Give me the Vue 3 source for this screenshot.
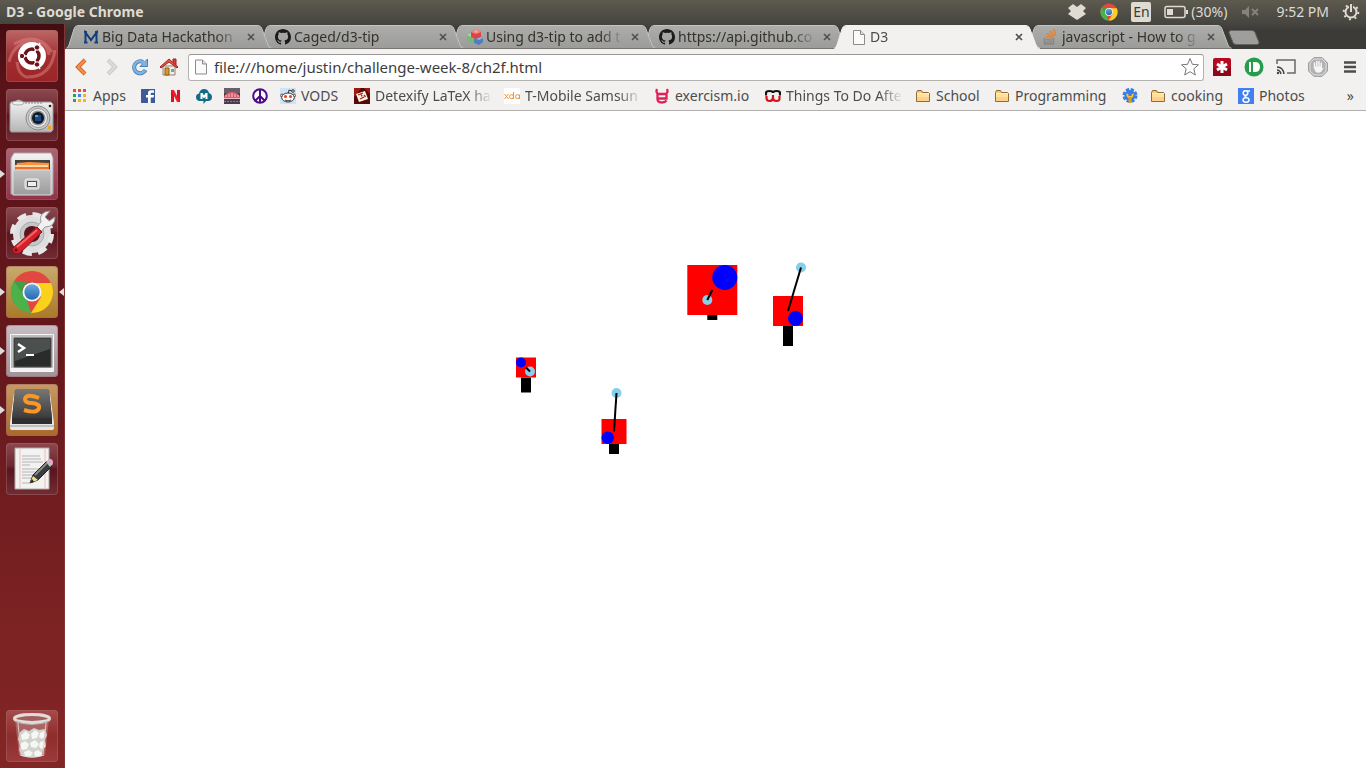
<script setup>
import { ref } from 'vue'

const address = ref('file:///home/justin/challenge-week-8/ch2f.html')

const icons = {
  doc: '<path d="M2.5 1.5h7l4 4v10h-11z" fill="#fafafa" stroke="#8b8b8b"/><path d="M9.5 1.5v4h4" fill="#ddd" stroke="#8b8b8b"/>',
  folder: '<path d="M1.5 13.5v-9l1-2h4l1 2h6l1 1v8z" fill="#f8c66d" stroke="#8f6a3a"/><path d="M2 6h12v3H2z" fill="#ffe2a2"/><path d="M2 9h12v4H2z" fill="#fdd286"/><path d="M2 5.500h12" stroke="#fff0c4"/>',
  github: '<path fill="#1b1b1b" d="M8 0C3.580 0 0 3.580 0 8c0 3.540 2.290 6.530 5.470 7.590.4.070.55-.17.55-.38v-1.490c-2.230.48-2.700-1.070-2.700-1.070-.36-.93-.89-1.180-.89-1.180-.73-.5.050-.49.050-.49.8.060 1.230.83 1.230.83.72 1.230 1.880.87 2.340.66.070-.52.28-.87.51-1.070-1.780-.2-3.640-.89-3.640-3.950 0-.87.31-1.590.82-2.150-.08-.2-.36-1.020.080-2.120 0 0 .67-.21 2.200.82a7.600 7.600 0 0 1 4 0c1.530-1.040 2.200-.82 2.200-.82.44 1.100.16 1.920.080 2.120.51.56.82 1.270.82 2.150 0 3.070-1.870 3.750-3.650 3.950.29.25.54.73.54 1.480v2.200c0 .21.15.46.55.38A8 8 0 0 0 16 8c0-4.420-3.580-8-8-8z"/>',
  mmark: '<path d="M2.500 14V3.500L8 11l5.500-7.500V14M1 3h3M12 3h3M1 13.500h3.500M11.500 13.500H15" fill="none" stroke="#123f7c" stroke-width="2"/>',
  cubes: '<path d="M0 6l4-2 4 2v6l-4 2-4-3z" fill="#79b777"/><path d="M0 6l4-2 4 2-4 2z" fill="#a9d6a3"/><path d="M7 9l4-2 5 2v4l-4 3-5-2z" fill="#4e7fc0"/><path d="M7 9l4-2 5 2-4 2z" fill="#8db6e6"/><path d="M4 3l5-3 5 3v5l-5 2-5-2z" fill="#d84747"/><path d="M4 3l5-3 5 3-5 2z" fill="#f58580"/><circle cx="9" cy="2" r="1.500" fill="#f9a39b"/>',
  stack: '<path d="M1.500 9v6h9V9" fill="none" stroke="#858585" stroke-width="1.500"/><path d="M3 13h6M3 10.500l6 .5" stroke="#8f8b82" stroke-width="1.500"/><path d="M3 7.500l6 1.500M4 4.500l6 3.500M7 2l4.500 5M11 0l1.500 6" stroke="#e38431" stroke-width="1.500"/>',
  apps: '<path d="M1 1h3v3H1zM6 1h3v3H6zM11 1h3v3h-3z" fill="#e94b3c"/><path d="M1 6h3v3H1z" fill="#29a55a"/><path d="M6 6h3v3H6z" fill="#3d85ee"/><path d="M11 6h3v3h-3z" fill="#f4b321"/><path d="M1 11h3v3H1z" fill="#29a55a"/><path d="M6 11h3v3H6zM11 11h3v3h-3z" fill="#f4b321"/>',
  facebook: '<path d="M1 1h14v14H1z" fill="#3f5c9a"/><path d="M8 15V9.500H6V7h2V5q0-2.700 3-2.700h3v2.400h-2q-1.300 0-1.300 1V7H14l-.4 2.500h-2.900V15z" fill="#fff"/>',
  netflix: '<path d="M3 2h3v12H3zM9 2h3v12H9z" fill="#d01525"/><path d="M3 2h3l6 12H9z" fill="#f31b2d"/>',
  cloud: '<path d="M4 13q-4 0-4-4 0-3 3-3.500Q4 1 8 1q4 0 5 4 3 1 3 4 0 4-4 4h-2l-2.500 3V13z" fill="#146b87"/><path d="M4.500 11V5h2L8 7.500 9.500 5h2v6h-2V8.500L8 10.500 6.500 8.500V11z" fill="#fff"/>',
  photo: '<path d="M0 0h16v16H0z" fill="#4a3b50"/><path d="M0 0h16v5H0z" fill="#695f68"/><path d="M0 9q2-5 8-5t8 5v2H0z" fill="#d75e6d"/><path d="M2 9V7M5 9V6M8 9V5M11 9V6M14 9V7" stroke="#ffc3c6"/><path d="M0 10.500h16" stroke="#eeb6bd"/><path d="M0 13.500h16" stroke="#a36c7c" stroke-dasharray="2 1"/>',
  peace: '<circle cx="8" cy="8" r="6.800" fill="#fff" stroke="#4d0a86" stroke-width="2"/><path d="M8 1v14M8 8l-5 5M8 8l5 5" stroke="#4d0a86" stroke-width="2"/>',
  reddit: '<path d="M0 0h16v16H0z" fill="#cfe3f5"/><path d="M8 6l1-4 3 1" fill="none" stroke="#333"/><circle cx="13" cy="3" r="1.300" fill="#fff" stroke="#333"/><circle cx="2" cy="7.500" r="1.500" fill="#fff" stroke="#555"/><circle cx="14" cy="7.500" r="1.500" fill="#fff" stroke="#555"/><ellipse cx="8" cy="9.500" rx="6.300" ry="4.500" fill="#fff" stroke="#333"/><circle cx="5.500" cy="8.500" r="1.500" fill="#f13b1c"/><circle cx="10.500" cy="8.500" r="1.500" fill="#f13b1c"/><path d="M5 12q3 2 6 0" fill="none" stroke="#333"/>',
  detexify: '<path d="M0 0h16v16H0z" fill="#550808"/><path d="M0 0h7L3 6 0 9zM10 0h6v6z" fill="#9c1d0e"/><path d="M2 6l9-3 3 8-9 3z" fill="#fff5e4"/><path d="M4 7l5-2M7 5.500l1 3M6 11l4-2M10 7l1.500 2" stroke="#b32117" stroke-width="1.300"/>',
  xda: '<path d="M0 0h16v16H0z" fill="#fff"/><path d="M.5 6l4 5M4.500 6l-4 5M9.500 4v7M15.500 6.500V11" fill="none" stroke="#f0953d"/><circle cx="7.500" cy="8.700" r="2" fill="none" stroke="#f0953d"/><circle cx="13.500" cy="8.700" r="2" fill="none" stroke="#f0953d"/>',
  exercism: '<path d="M3 1q-1.500 4 1.500 5h7q3-1 1.500-5M3.500 6v5q0 3.500 4.500 3.500 3 0 4.500-2M4 10.500h8.500V6" fill="none" stroke="#df2159" stroke-width="2.300"/>',
  things: '<path d="M1 7.500V5q0-2 3.500-2T8 5q0-2 3.500-2T15 5v2.500" fill="none" stroke="#111" stroke-width="2.200"/><path d="M1.500 8v2q0 3 3 3T8 10V7M8 8v2q0 3 3.500 3t3-3V8" fill="none" stroke="#d5131c" stroke-width="2.200"/>',
  gear: '<circle cx="8" cy="7.500" r="5.500" fill="#3b7de8"/><circle cx="8" cy="7.500" r="6" fill="none" stroke="#3b7de8" stroke-width="3" stroke-dasharray="3.200 1.500"/><path d="M4.500 5v3l2 2.500h3l2-2.500V5L9.500 6.500V8h-3V6.500z" fill="#fbc42f"/><path d="M6.500 9h3v6h-3z" fill="#d99d1a"/>',
  google: '<path d="M0 0h16v16H0z" fill="#437ff1"/><circle cx="7.500" cy="5" r="2.300" fill="none" stroke="#fff" stroke-width="1.500"/><path d="M9 3h3M9 7.500q-3 1-1.500 2" fill="none" stroke="#fff" stroke-width="1.300"/><ellipse cx="8" cy="12" rx="3" ry="2.200" fill="none" stroke="#fff" stroke-width="1.500"/>'
}

const tabs = [
  { title: 'Big Data Hackathon', icon: 'mmark' },
  { title: 'Caged/d3-tip', icon: 'github' },
  { title: 'Using d3-tip to add t', icon: 'cubes' },
  { title: 'https://api.github.co', icon: 'github' },
  { title: 'D3', icon: 'doc', active: true },
  { title: 'javascript - How to g', icon: 'stack' }
]

const bookmarks = [
  { icon: 'apps', text: 'Apps', width: 35 },
  { icon: 'facebook', name: 'Facebook' },
  { icon: 'netflix', name: 'Netflix' },
  { icon: 'cloud', name: 'M' },
  { icon: 'photo', name: 'Photo page' },
  { icon: 'peace', name: 'Peace' },
  { icon: 'reddit', text: 'VODS', width: 41 },
  { icon: 'detexify', text: 'Detexify LaTeX ha', width: 117, cut: true },
  { icon: 'xda', text: 'T-Mobile Samsun', width: 117, cut: true },
  { icon: 'exercism', text: 'exercism.io', width: 78 },
  { icon: 'things', text: 'Things To Do Afte', width: 117, cut: true },
  { icon: 'folder', text: 'School', width: 46 },
  { icon: 'folder', text: 'Programming', width: 95 },
  { icon: 'gear', name: 'Tools' },
  { icon: 'folder', text: 'cooking', width: 55 },
  { icon: 'google', text: 'Photos', width: 50 }
]

const tiles = {
  ubuntu: '<path d="M3 32q5-22 29-21 10 4 11 14M49 20Q45 48 20 47q-8-3-9-15M8 14q24-13 38 8" fill="none" stroke="#e58d8d" stroke-width="3" opacity=".45"/><circle cx="26" cy="26" r="14" fill="#fff"/><circle cx="26" cy="26" r="7" fill="none" stroke="#6f1219" stroke-width="3.500"/><path d="M26 26L12 26M26 26l8-13M26 26l8 13" stroke="#fff" stroke-width="1.500"/><circle cx="26" cy="26" r="5" fill="#fff"/><g fill="#6f1219" stroke="#fff" stroke-width="1"><circle cx="16" cy="26" r="2.700"/><circle cx="31" cy="17.500" r="2.700"/><circle cx="31" cy="34.500" r="2.700"/></g>',
  camera: '<path d="M5 13h4q3-4 8 0h28l2 2v26l-2 2H5l-1-2V15z" fill="url(#silver)" stroke="#999"/><ellipse cx="12" cy="14" rx="6" ry="2" fill="#eee" stroke="#aaa"/><path d="M19 14h18" stroke="#888" stroke-dasharray="2 1"/><circle cx="32" cy="29" r="12" fill="#c9c9c9" stroke="#8a8a8a"/><circle cx="32" cy="29" r="9.500" fill="#ececec" stroke="#999"/><circle cx="32" cy="29" r="7.500" fill="#8e9297"/><circle cx="32" cy="29" r="6" fill="#14181f"/><path d="M29 26h6v6h-6z" fill="#174a8c"/><path d="M29 26h3v2h-3z" fill="#58a4de"/><path d="M42 37h3v3h-3z" fill="#f6a020"/><circle cx="44" cy="17" r="1.300" fill="#222"/>',
  files: '<path d="M8 5h37l2 5v36H5V10z" fill="url(#silver)" stroke="#aaa"/><path d="M9 12h35v12H9z" fill="#44403c"/><path d="M11 15l12-1 20 1v8H9z" fill="#fb923e"/><path d="M9 18h33" stroke="#fff0cf" stroke-width="1.500"/><path d="M9 20h34" stroke="#ed7128" stroke-width="2"/><path d="M7 22h38v25H7z" fill="url(#drawer)" stroke="#ddd"/><rect x="19" y="31" width="14" height="10" rx="2" fill="#ccc" stroke="#efefef"/><rect x="21.500" y="33.500" width="9" height="5" fill="#eee" stroke="#555"/>',
  settings: '<circle cx="26" cy="27" r="15" fill="none" stroke="#dedede" stroke-width="8"/><circle cx="26" cy="27" r="19.500" fill="none" stroke="#e6e6e6" stroke-width="5" stroke-dasharray="9 6.300"/><circle cx="26" cy="27" r="12" fill="#c6c6c6" stroke="#aaa"/><circle cx="26" cy="27" r="8" fill="#59151d"/><path d="M29 22l6-7q-2-7 4-10l5-1-5 6 4 4 6-4q0 10-10 10l-6 7z" fill="#f1f1f1" stroke="#999"/><path d="M31 20l5 5-22 21q-5 2-7-1-2-3 1-5z" fill="#d71f29" stroke="#7d171d"/><path d="M11 40l20-17" stroke="#f26569" stroke-width="2"/><circle cx="10" cy="43" r="1.500" fill="#5e1117"/>',
  chrome: '<circle cx="26" cy="26" r="21" fill="#e14940"/><path d="M8 15L20 31 25 47A21 21 0 0 1 8 15" fill="#4bb24b"/><path d="M26 17h19A21 21 0 0 1 25 47l10-16z" fill="#fbd21b"/><path d="M8 15l11 16 1-10L26 17" fill="#3fa045"/><path d="M17 24q2-7 9-7" stroke="#cc3935" stroke-width="2" fill="none"/><circle cx="26" cy="26" r="9.500" fill="#f5f5f5"/><circle cx="26" cy="26" r="7.700" fill="url(#blueball)"/>',
  terminal: '<path d="M4.500 9.500h43v37h-43z" fill="#bdbdbd" stroke="#f5f5f5"/><path d="M4 43h44v3H4z" fill="#f2f2f2"/><path d="M8 13h37v29H8z" fill="#292c2b" stroke="#555"/><path d="M9 14h35v10L9 36z" fill="#4b504e"/><path d="M12 19l6 4-6 4" fill="none" stroke="#fff" stroke-width="2.500"/><path d="M20 30h8" stroke="#fff" stroke-width="2"/>',
  sublime: '<path d="M4 39L8 9h36l4 30v5q0 2-2 2H6q-2 0-2-2z" fill="#e6e6e6"/><path d="M4 42h44" stroke="#999"/><path d="M9 6h34l3 29v5H6v-5z" fill="#2f2f2f"/><path d="M11 5h30q2 0 2 2l3 27H6L9 7q0-2 2-2z" fill="url(#dark)"/><path d="M33 14q-13-5-14 1 0 4 7 4 8 1 7 5-2 6-15 2" fill="none" stroke="#f99725" stroke-width="4"/>',
  editor: '<path d="M9 5h34v41H9z" fill="#f2f2f0" stroke="#aaa"/><path d="M14 6v40M39 6v40" stroke="#f0bcbc"/><path d="M16 13h18M16 16h19M16 19h21M16 22h8M16 26h21M16 29h17M16 32h12M16 35h10M16 40h8" stroke="#b4b4b8"/><path d="M24 40l3-8 14-14 5 5-14 14z" fill="#383c3d" stroke="#222"/><path d="M29 32l12-12" stroke="#888" stroke-width="2"/><path d="M40 19l3-3 4 5-3 3z" fill="#bfc0c0"/><path d="M43 16q2-1 4 2v3l-2-1-3-3z" fill="#f09dcc"/><path d="M24 40l3-7 5 4z" fill="#f3db91"/><path d="M24 40l2-4 2 3z" fill="#222"/>',
  trash: '<path d="M9 9l4 36q13 5 26 0l4-36z" fill="#e3caca" opacity=".3"/><path d="M14 22l4-3 5 2 5-3 5 2 6-1 2 6-2 5 1 6-3 4-1 6q-10 3-20 0l-3-6 1-5-2-6z" fill="#d2d2cd"/><path d="M15 25l5-4 4 4-2 4-6 1zM25 24l4-4 4 3-2 5-5 1zM34 23l4-2 1 5-3 3-3-2zM14 34l5-3 4 3-2 5-5 1zM24 33l5-3 4 4-3 4-5-1zM34 32l4-1 1 6-4 2-2-3zM18 42l5-2 4 3-3 4-5-1zM28 42l4-2 4 3-1 3-6 1z" fill="#f6f6f2"/><path d="M12 13l3 31M40 13l-3 31" stroke="#e0c7c7"/><path d="M14 45q12 4 24 0" fill="none" stroke="#ddd"/><ellipse cx="26" cy="8.500" rx="17.500" ry="4" fill="#a45e5e" stroke="#deddd9" stroke-width="3"/><path d="M9 11q17 7 34 0" fill="none" stroke="#b5b3b0"/>'
}

const launchers = [
  { id: 'ubuntu', name: 'Dash home' },
  { id: 'camera', name: 'Camera' },
  { id: 'files', name: 'Files', running: true },
  { id: 'settings', name: 'System settings' },
  { id: 'chrome', name: 'Google Chrome', running: true, focused: true },
  { id: 'terminal', name: 'Terminal', running: true },
  { id: 'sublime', name: 'Sublime Text', running: true },
  { id: 'editor', name: 'Text editor' },
  { id: 'trash', name: 'Trash' }
]

/* cx, cy: middle of the body; dot: its blue circle; tip: end of the antenna */
const robots = [
  { cx: 461, cy: 256.5, side: 20, leg: 15, dot: [-1, -1], tip: [465, 260.5] },
  { cx: 549, cy: 320.5, side: 25, leg: 10, dot: [-1, 1], tip: [551.5, 282] },
  { cx: 647.3, cy: 179, side: 50, leg: 5, dot: [1, -1], tip: [642.3, 189] },
  { cx: 723, cy: 200, side: 30, leg: 20, dot: [1, 1], tip: [736, 156.5] }
]
</script>

<template>
  <div class="desktop">
    <svg class="defs" aria-hidden="true">
      <defs>
        <linearGradient id="silver" x1="0" y1="0" x2="0" y2="1"><stop offset="0" stop-color="#f4f4f4" /><stop offset="1" stop-color="#b5b5b5" /></linearGradient>
        <linearGradient id="drawer" x1="0" y1="0" x2="0" y2="1"><stop offset="0" stop-color="#c2c2c2" /><stop offset="1" stop-color="#9c9c9c" /></linearGradient>
        <linearGradient id="dark" x1="0" y1="0" x2="0" y2="1"><stop offset="0" stop-color="#777" /><stop offset="1" stop-color="#3b3b3b" /></linearGradient>
        <linearGradient id="blueball" x1="0" y1="0" x2="0" y2="1"><stop offset="0" stop-color="#6aa8dc" /><stop offset="1" stop-color="#2468b0" /></linearGradient>
        <linearGradient id="tabfill" x1="0" y1="0" x2="0" y2="1"><stop offset="0" stop-color="#acacaa" /><stop offset="1" stop-color="#9b9b99" /></linearGradient>
      </defs>
    </svg>

    <header class="panel">
      <span class="window-title">D3 - Google Chrome</span>
      <div class="indicators">
        <button class="dropbox" aria-label="Dropbox">
          <svg width="18" height="16" viewBox="0 0 18 16"><path d="M5 0l4 3 4-3 5 4-3 3 3 3-3 2-6 4-6-4-3-2 3-3-3-3z" fill="#dfdbd2" /></svg>
        </button>
        <button class="chrome-status" aria-label="Chrome">
          <svg width="18" height="18" viewBox="4 4 44 44" v-html="tiles.chrome" />
        </button>
        <button class="lang">En</button>
        <button class="battery">
          <svg width="24" height="14" viewBox="0 0 24 14"><rect x="1" y="1.500" width="20" height="11" rx="2" fill="none" stroke="#dfdbd2" stroke-width="1.500" /><path d="M3 4h6v6H3zM22 5h2v4h-2z" fill="#dfdbd2" /></svg>
          <span>(30%)</span>
        </button>
        <button class="sound" aria-label="Sound muted">
          <svg width="18" height="14" viewBox="0 0 18 14"><path d="M1 5h3l4-4v12L4 9H1z" fill="#85827b" /><path d="M11 4l6 6M17 4l-6 6" stroke="#85827b" stroke-width="2" /></svg>
        </button>
        <button class="clock">9:52 PM</button>
        <button class="power" aria-label="Session">
          <svg width="18" height="18" viewBox="0 0 18 18"><circle cx="9" cy="9" r="5.500" fill="none" stroke="#dfdbd2" stroke-width="2" /><circle cx="9" cy="9" r="7.300" fill="none" stroke="#dfdbd2" stroke-width="2" stroke-dasharray="2 3.730" /><path d="M7 0h4v6H7z" fill="#524f47" /><path d="M9 1v8" stroke="#dfdbd2" stroke-width="2" /></svg>
        </button>
      </div>
    </header>

    <div class="workspace">
      <nav class="launcher" aria-label="Launcher">
        <button
          v-for="item in launchers"
          :key="item.id"
          class="tile"
          :class="[item.id, { running: item.running, focused: item.focused }]"
          :aria-label="item.name"
        >
          <svg width="52" height="52" viewBox="0 0 52 52" v-html="tiles[item.id]" />
        </button>
      </nav>

      <div class="browser">
        <div class="tabstrip">
          <div v-for="tab in tabs" :key="tab.title" class="tab" :class="{ active: tab.active }">
            <svg class="tab-shape" viewBox="0 0 206 24" preserveAspectRatio="none">
              <path class="body" d="M0 24Q2 23 3 20L8 4Q9 1 12 1H192Q195 1 196 4L202 20Q203 23 206 24z" />
              <path class="rim" d="M0 23.500Q2 23 3 20L8 4Q9 .5 12 .5H192Q195 .5 196 4L202 20Q203 23 206 23.500" />
              <path v-if="!tab.active" class="base" d="M0 23.500H206" />
            </svg>
            <svg class="tab-icon" width="16" height="16" viewBox="0 0 16 16" v-html="icons[tab.icon]" />
            <a class="tab-title" href="#">{{ tab.title }}</a>
            <button class="close" aria-label="Close tab">
              <svg width="8" height="8" viewBox="0 0 8 8"><path d="M1 1l6 6M7 1L1 7" stroke="#50504e" stroke-width="1.600" /></svg>
            </button>
          </div>
          <button class="newtab" aria-label="New tab">
            <svg width="32" height="15" viewBox="0 0 32 15"><path d="M3 .5h21q2 0 3 2l4 10q0 2-2 2H8q-2 0-3-2L1 2.500Q1 .5 3 .5z" fill="#9e9e9c" stroke="#63625e" /></svg>
          </button>
        </div>

        <div class="toolbar">
          <div class="nav-buttons">
            <button aria-label="Back">
              <svg width="20" height="20" viewBox="0 0 20 20"><path d="M13 3l-7 7 7 7" fill="none" stroke="#c9581c" stroke-width="4" /><path d="M13 3l-7 7 7 7" fill="none" stroke="#f38c48" stroke-width="2.500" /></svg>
            </button>
            <button aria-label="Forward">
              <svg width="20" height="20" viewBox="0 0 20 20"><path d="M7 3l7 7-7 7" fill="none" stroke="#c7c5c2" stroke-width="4" /><path d="M7 3l7 7-7 7" fill="none" stroke="#dcdad8" stroke-width="2.500" /></svg>
            </button>
            <button aria-label="Reload">
              <svg width="20" height="20" viewBox="0 0 20 20"><path d="M15.500 13A6 6 0 1 1 13 5" fill="none" stroke="#4a80b8" stroke-width="4" /><path d="M17.500 2v7.500H10z" fill="#80b2e2" stroke="#4a80b8" /><path d="M15 13.500A6 6 0 1 1 13 5l2 2" fill="none" stroke="#80b2e2" stroke-width="2.500" /></svg>
            </button>
            <button aria-label="Home">
              <svg width="20" height="20" viewBox="0 0 20 20"><path d="M4 9h12v9H4z" fill="#f2eee5" stroke="#91816f" /><path d="M14 2h3v6h-3z" fill="#d83f3a" stroke="#9c2523" /><path d="M1 10l9-8 9 8-1 1-8-6-8 6z" fill="#e6544d" stroke="#a62521" /><path d="M6 11h4v7H6z" fill="#d5982b" stroke="#8b6119" /><path d="M12 12h3v3h-3z" fill="#6f9fcb" /></svg>
            </button>
          </div>
          <div class="omnibox">
            <svg width="16" height="18" viewBox="0 0 16 17" v-html="icons.doc" />
            <input v-model="address" type="text" aria-label="Address" spellcheck="false" />
            <button class="star" aria-label="Bookmark this page">
              <svg width="20" height="20" viewBox="0 0 20 20"><path d="M10 1.500l2.400 5.800 6.100.5-4.700 4 1.500 6.200L10 14.700 4.700 18l1.500-6.200-4.700-4 6.100-.5z" fill="#fff" stroke="#777" /></svg>
            </button>
          </div>
          <div class="extensions">
            <button aria-label="Password manager">
              <svg width="20" height="20" viewBox="0 0 20 20"><rect x="1" y="1" width="18" height="18" rx="2" fill="#b40921" /><path d="M1 11h18v8H1z" fill="#8f0619" /><path d="M10 4v12M5 7l10 6M15 7L5 13" stroke="#fff" stroke-width="3" /></svg>
            </button>
            <button aria-label="Pushbullet">
              <svg width="20" height="20" viewBox="0 0 20 20"><circle cx="10" cy="10" r="9.500" fill="#259d4b" /><path d="M5 5h2v10H5zM9 5h2q5 0 5 5t-5 5H9z" fill="#fff" /></svg>
            </button>
            <button aria-label="Cast">
              <svg width="20" height="20" viewBox="0 0 20 20"><path d="M1 7V3h18v13h-8" fill="none" stroke="#686868" stroke-width="1.500" /><path d="M1 10q6 0 7 7M1 13q3 0 4 4" fill="none" stroke="#444" stroke-width="1.500" /><circle cx="2" cy="16" r="1.200" fill="#444" /></svg>
            </button>
            <button aria-label="Ad blocker">
              <svg width="20" height="20" viewBox="0 0 20 20"><path d="M6 .5h8L19.500 6v8L14 19.500H6L.5 14V6z" fill="#b2b2b2" stroke="#a1a1a1" /><path d="M6 2h8l4 4v8l-4 4H6l-4-4V6z" fill="none" stroke="#ddd" /><path d="M6.500 11V6M8.800 10V4.500M11 10V4.500M13.200 11V6" stroke="#f5f5f5" stroke-width="1.500" stroke-linecap="round" /><path d="M5.800 9.500h8.200v2l2-1-3 4.500q-4 2-6-1z" fill="#f5f5f5" /></svg>
            </button>
            <button class="menu" aria-label="Menu">
              <svg width="14" height="16" viewBox="0 0 14 16"><path d="M1 3.500h12M1 8h12M1 12.500h12" stroke="#4c4c4c" stroke-width="2.600" /></svg>
            </button>
          </div>
        </div>

        <nav class="bookmarks" aria-label="Bookmarks">
          <a v-for="mark in bookmarks" :key="mark.icon + mark.text" href="#" :aria-label="mark.text || mark.name">
            <svg width="16" height="16" viewBox="0 0 16 16" v-html="icons[mark.icon]" />
            <span v-if="mark.text" :class="{ cut: mark.cut }" :style="{ width: mark.width + 'px' }">{{ mark.text }}</span>
          </a>
          <button class="more" aria-label="More bookmarks">»</button>
        </nav>

        <main class="page">
          <svg class="drawing" role="img" aria-label="Four robots">
            <g v-for="(bot, i) in robots" :key="i">
              <rect :x="bot.cx - 5" :y="bot.cy + bot.side / 2" width="10" :height="bot.leg" fill="black" />
              <rect :x="bot.cx - bot.side / 2" :y="bot.cy - bot.side / 2" :width="bot.side" :height="bot.side" fill="red" />
              <circle :cx="bot.cx + bot.dot[0] * bot.side / 4" :cy="bot.cy + bot.dot[1] * bot.side / 4" :r="bot.side / 4" fill="blue" />
              <circle :cx="bot.tip[0]" :cy="bot.tip[1]" r="5" fill="skyblue" />
              <line :x1="bot.cx" :y1="bot.cy" :x2="bot.tip[0]" :y2="bot.tip[1]" stroke="black" stroke-width="2" />
            </g>
          </svg>
        </main>
      </div>
    </div>
  </div>
</template>

<style>
body {
  margin: 0;
}
</style>

<style scoped>
.desktop {
  display: flex;
  flex-direction: column;
  height: 100vh;
  overflow: hidden;
  background: #fff;
  color: #4c4c4c;
  font: 14px/20px "Noto Sans", "Open Sans", sans-serif;
}
.defs {
  position: absolute;
  width: 0;
  height: 0;
}
button {
  display: flex;
  align-items: center;
  justify-content: center;
  padding: 0;
  border: 0;
  background: none;
  color: inherit;
  font: inherit;
}
a {
  color: inherit;
  text-decoration: none;
}
svg {
  display: block;
  flex: none;
}
.panel {
  display: flex;
  align-items: center;
  justify-content: space-between;
  height: 24px;
  padding: 0 6px;
  background: linear-gradient(#5d5a4f, #45443f);
  color: #dfdbd2;
}
.window-title {
  font-weight: 700;
}
.indicators {
  display: flex;
  align-items: center;
}
.chrome-status {
  margin-left: 14px;
}
.lang {
  width: 20px;
  height: 20px;
  margin-left: 13px;
  border-radius: 2px;
  background: #dfdbd2;
  color: #3c3b37;
}
.battery {
  gap: 3px;
  margin-left: 13px;
}
.sound {
  margin-left: 14px;
}
.clock {
  margin-left: 17px;
}
.power {
  margin-left: 13px;
}
.workspace {
  display: flex;
  flex: 1;
  min-height: 0;
}
.launcher {
  display: flex;
  flex: none;
  flex-direction: column;
  gap: 7px;
  box-sizing: border-box;
  width: 65px;
  padding: 6px;
  border-right: 1px solid #833437;
  background: linear-gradient(#440c10, #5a1319 8%, #65181c 45%, #7b2223 80%, #832525);
}
.tile {
  position: relative;
  width: 52px;
  height: 52px;
  border-radius: 4px;
  background: linear-gradient(#8b4a50, #6c252d 45%, #59151d 50%, #712c34);
  box-shadow: inset 0 0 0 1px #a1646a80;
}
.tile.ubuntu {
  background: linear-gradient(#bd6767, #a12f31 50%, #9b2427);
}
.tile.files {
  background: linear-gradient(#ab6675, #92314a);
}
.tile.chrome {
  background: linear-gradient(#c9aa6d, #a87a28);
}
.tile.terminal {
  background: linear-gradient(#c8bdc2, #9f9298);
}
.tile.sublime {
  background: linear-gradient(#c69a63, #a86a2c);
}
.tile.trash {
  margin-top: auto;
  background: linear-gradient(#a94b4b, #8e2c2c 50%, #9c3b3b);
}
.tile.running::before,
.tile.focused::after {
  content: "";
  position: absolute;
  top: 22px;
  border: 4px solid transparent;
}
.tile.running::before {
  left: -6px;
  border-left: 5px solid #ddd;
  border-right: 0;
}
.tile.focused::after {
  right: -6px;
  border-right: 5px solid #ddd;
  border-left: 0;
}
.browser {
  display: flex;
  flex: 1;
  flex-direction: column;
  min-width: 0;
}
.tabstrip {
  display: flex;
  align-items: flex-end;
  height: 25px;
  padding-left: 1px;
  background: linear-gradient(#45443f, #3c3b37 6px);
}
.tab {
  position: relative;
  display: flex;
  flex: 0 1 192px;
  align-items: center;
  box-sizing: border-box;
  min-width: 0;
  height: 24px;
  padding-left: 17px;
  color: #35312b;
}
.tab:nth-child(1) {
  z-index: 4;
}
.tab:nth-child(2) {
  z-index: 3;
}
.tab:nth-child(3) {
  z-index: 2;
}
.tab:nth-child(4) {
  z-index: 1;
}
.tab.active {
  z-index: 5;
  color: #4c4c4c;
}
.tab:last-of-type {
  z-index: 0;
}
.tab-shape {
  position: absolute;
  inset: 0 auto 0 0;
  width: calc(100% + 14px);
  height: 24px;
}
.body {
  fill: url(#tabfill);
}
.rim {
  fill: none;
  stroke: #c4c4c1;
}
.base {
  stroke: #777673;
}
.active .body {
  fill: #f2f1f0;
}
.active .rim {
  stroke: #f2f1f0;
}
.tab-icon,
.tab-title,
.close {
  position: relative;
}
.tab-title {
  flex: 1;
  overflow: hidden;
  min-width: 0;
  margin-left: 3px;
  white-space: nowrap;
  mask-image: linear-gradient(to left, transparent, #000 24px);
}
.close {
  width: 12px;
  height: 16px;
  margin: 0 1px 0 5px;
}
.newtab {
  height: 24px;
  margin-left: 10px;
}
.toolbar {
  display: flex;
  align-items: center;
  height: 36px;
  padding: 0 6px 0 7px;
  background: #f2f1f0;
}
.nav-buttons {
  display: flex;
  gap: 9px;
}
.omnibox {
  display: flex;
  flex: 1;
  align-items: center;
  box-sizing: border-box;
  min-width: 0;
  height: 27px;
  margin-left: 9px;
  padding: 0 3px 0 4px;
  border: 1px solid #b5b3b0;
  border-top-color: #999795;
  border-radius: 3px;
  background: #fff;
}
.omnibox input {
  flex: 1;
  min-width: 0;
  padding: 0;
  border: 0;
  margin-left: 5px;
  outline: 0;
  background: none;
  color: #3d3d3d;
  font: inherit;
  font-size: 15px;
}
.extensions {
  display: flex;
  gap: 12px;
  margin-left: 8px;
}
.menu {
  width: 20px;
}
.bookmarks {
  display: flex;
  align-items: center;
  gap: 12px;
  height: 22px;
  padding: 0 12px 3px 7px;
  border-bottom: 1px solid #b2b0ae;
  background: #f2f1f0;
}
.bookmarks a {
  display: flex;
  flex: none;
  align-items: center;
  gap: 5px;
}
.bookmarks span {
  white-space: nowrap;
}
.bookmarks .cut {
  overflow: hidden;
  mask-image: linear-gradient(to left, transparent, #000 24px);
}
.more {
  margin-left: auto;
}
.page {
  flex: 1;
  min-height: 0;
  background: #fff;
}
.drawing {
  width: 100%;
  height: 100%;
}
</style>
